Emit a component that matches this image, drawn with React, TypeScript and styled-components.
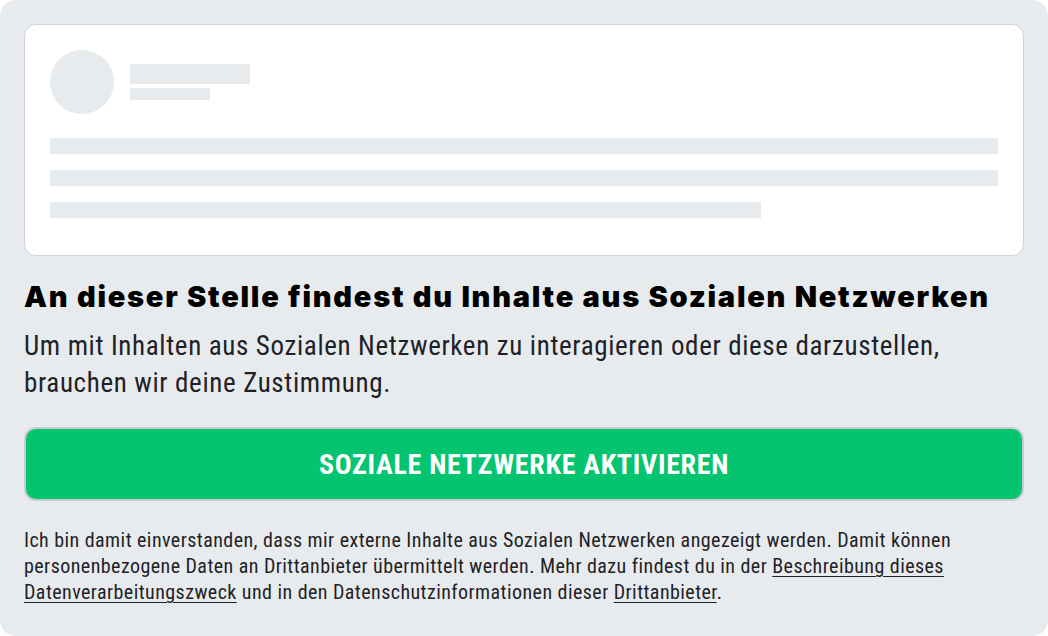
import React from "react";
import styled, { createGlobalStyle } from "styled-components";

const GlobalStyle = createGlobalStyle`
  html, body { margin: 0; padding: 0; background: #ffffff; }
  * { box-sizing: border-box; }
`;

const Panel = styled.section`
  width: 1048px;
  height: 636px;
  background: #e8ebee;
  border-radius: 16px;
  padding: 24px 24px 0 24px;
  display: flex;
  flex-direction: column;
`;

const SkeletonCard = styled.div`
  background: #ffffff;
  border: 1px solid #cfd3d8;
  border-radius: 12px;
  padding: 25px 25px 37px 25px;
  display: flex;
  flex-direction: column;
  gap: 24px;
`;

const SkeletonHeader = styled.div`
  display: flex;
  align-items: center;
  gap: 16px;
`;

const Avatar = styled.div`
  width: 64px;
  height: 64px;
  border-radius: 50%;
  background: #e8ebee;
`;

const HeaderBars = styled.div`
  display: flex;
  flex-direction: column;
  gap: 4px;
`;

const Bar = styled.div<{ $w: string; $h: number }>`
  width: ${(p) => p.$w};
  height: ${(p) => p.$h}px;
  background: #e8ebee;
`;

const Lines = styled.div`
  display: flex;
  flex-direction: column;
  gap: 16px;
`;

const Heading = styled.h2`
  margin: 24px 0 0 0;
  font-family: Inter, "Liberation Sans", sans-serif;
  font-weight: 900;
  font-size: 29px;
  line-height: 34px;
  letter-spacing: 1.75px;
  color: #000000;
  white-space: nowrap;
`;

const Lead = styled.p`
  margin: 14px 0 0 0;
  font-family: "Roboto Condensed", Roboto, sans-serif;
  font-weight: 400;
  font-size: 27px;
  line-height: 37px;
  letter-spacing: 0.65px;
  color: #1e2226;
`;

const ActivateButton = styled.button`
  margin-top: 25px;
  height: 74px;
  width: 100%;
  border: 2px solid #c9cccf;
  border-radius: 12px;
  background: #05c46f;
  color: #ffffff;
  font-family: "Roboto Condensed", Roboto, sans-serif;
  font-weight: 700;
  font-size: 28px;
  letter-spacing: 0.7px;
  display: flex;
  align-items: center;
  justify-content: center;
  cursor: pointer;
  padding: 0;
`;

const Notice = styled.p`
  margin: 26px 0 0 0;
  font-family: "Roboto Condensed", Roboto, sans-serif;
  font-weight: 400;
  font-size: 20px;
  line-height: 26px;
  letter-spacing: 0.44px;
  color: #1e2226;
`;

const NoticeLink = styled.a`
  color: inherit;
  text-decoration: underline;
  text-decoration-thickness: 1px;
  text-underline-offset: 3px;
`;

export default function App() {
  return (
    <>
      <GlobalStyle />
      <Panel>
        <SkeletonCard>
          <SkeletonHeader>
            <Avatar />
            <HeaderBars>
              <Bar $w="120px" $h={20} />
              <Bar $w="80px" $h={12} />
            </HeaderBars>
          </SkeletonHeader>
          <Lines>
            <Bar $w="100%" $h={16} />
            <Bar $w="100%" $h={16} />
            <Bar $w="75%" $h={16} />
          </Lines>
        </SkeletonCard>
        <Heading>An dieser Stelle findest du Inhalte aus Sozialen Netzwerken</Heading>
        <Lead>
          Um mit Inhalten aus Sozialen Netzwerken zu interagieren oder diese darzustellen,
          brauchen wir deine Zustimmung.
        </Lead>
        <ActivateButton type="button">SOZIALE NETZWERKE AKTIVIEREN</ActivateButton>
        <Notice>
          Ich bin damit einverstanden, dass mir externe Inhalte aus Sozialen Netzwerken angezeigt
          werden. Damit können personenbezogene Daten an Drittanbieter übermittelt werden. Mehr dazu
          findest du in der{" "}
          <NoticeLink href="#">Beschreibung dieses Datenverarbeitungszweck</NoticeLink> und in den
          Datenschutzinformationen dieser <NoticeLink href="#">Drittanbieter</NoticeLink>.
        </Notice>
      </Panel>
    </>
  );
}
